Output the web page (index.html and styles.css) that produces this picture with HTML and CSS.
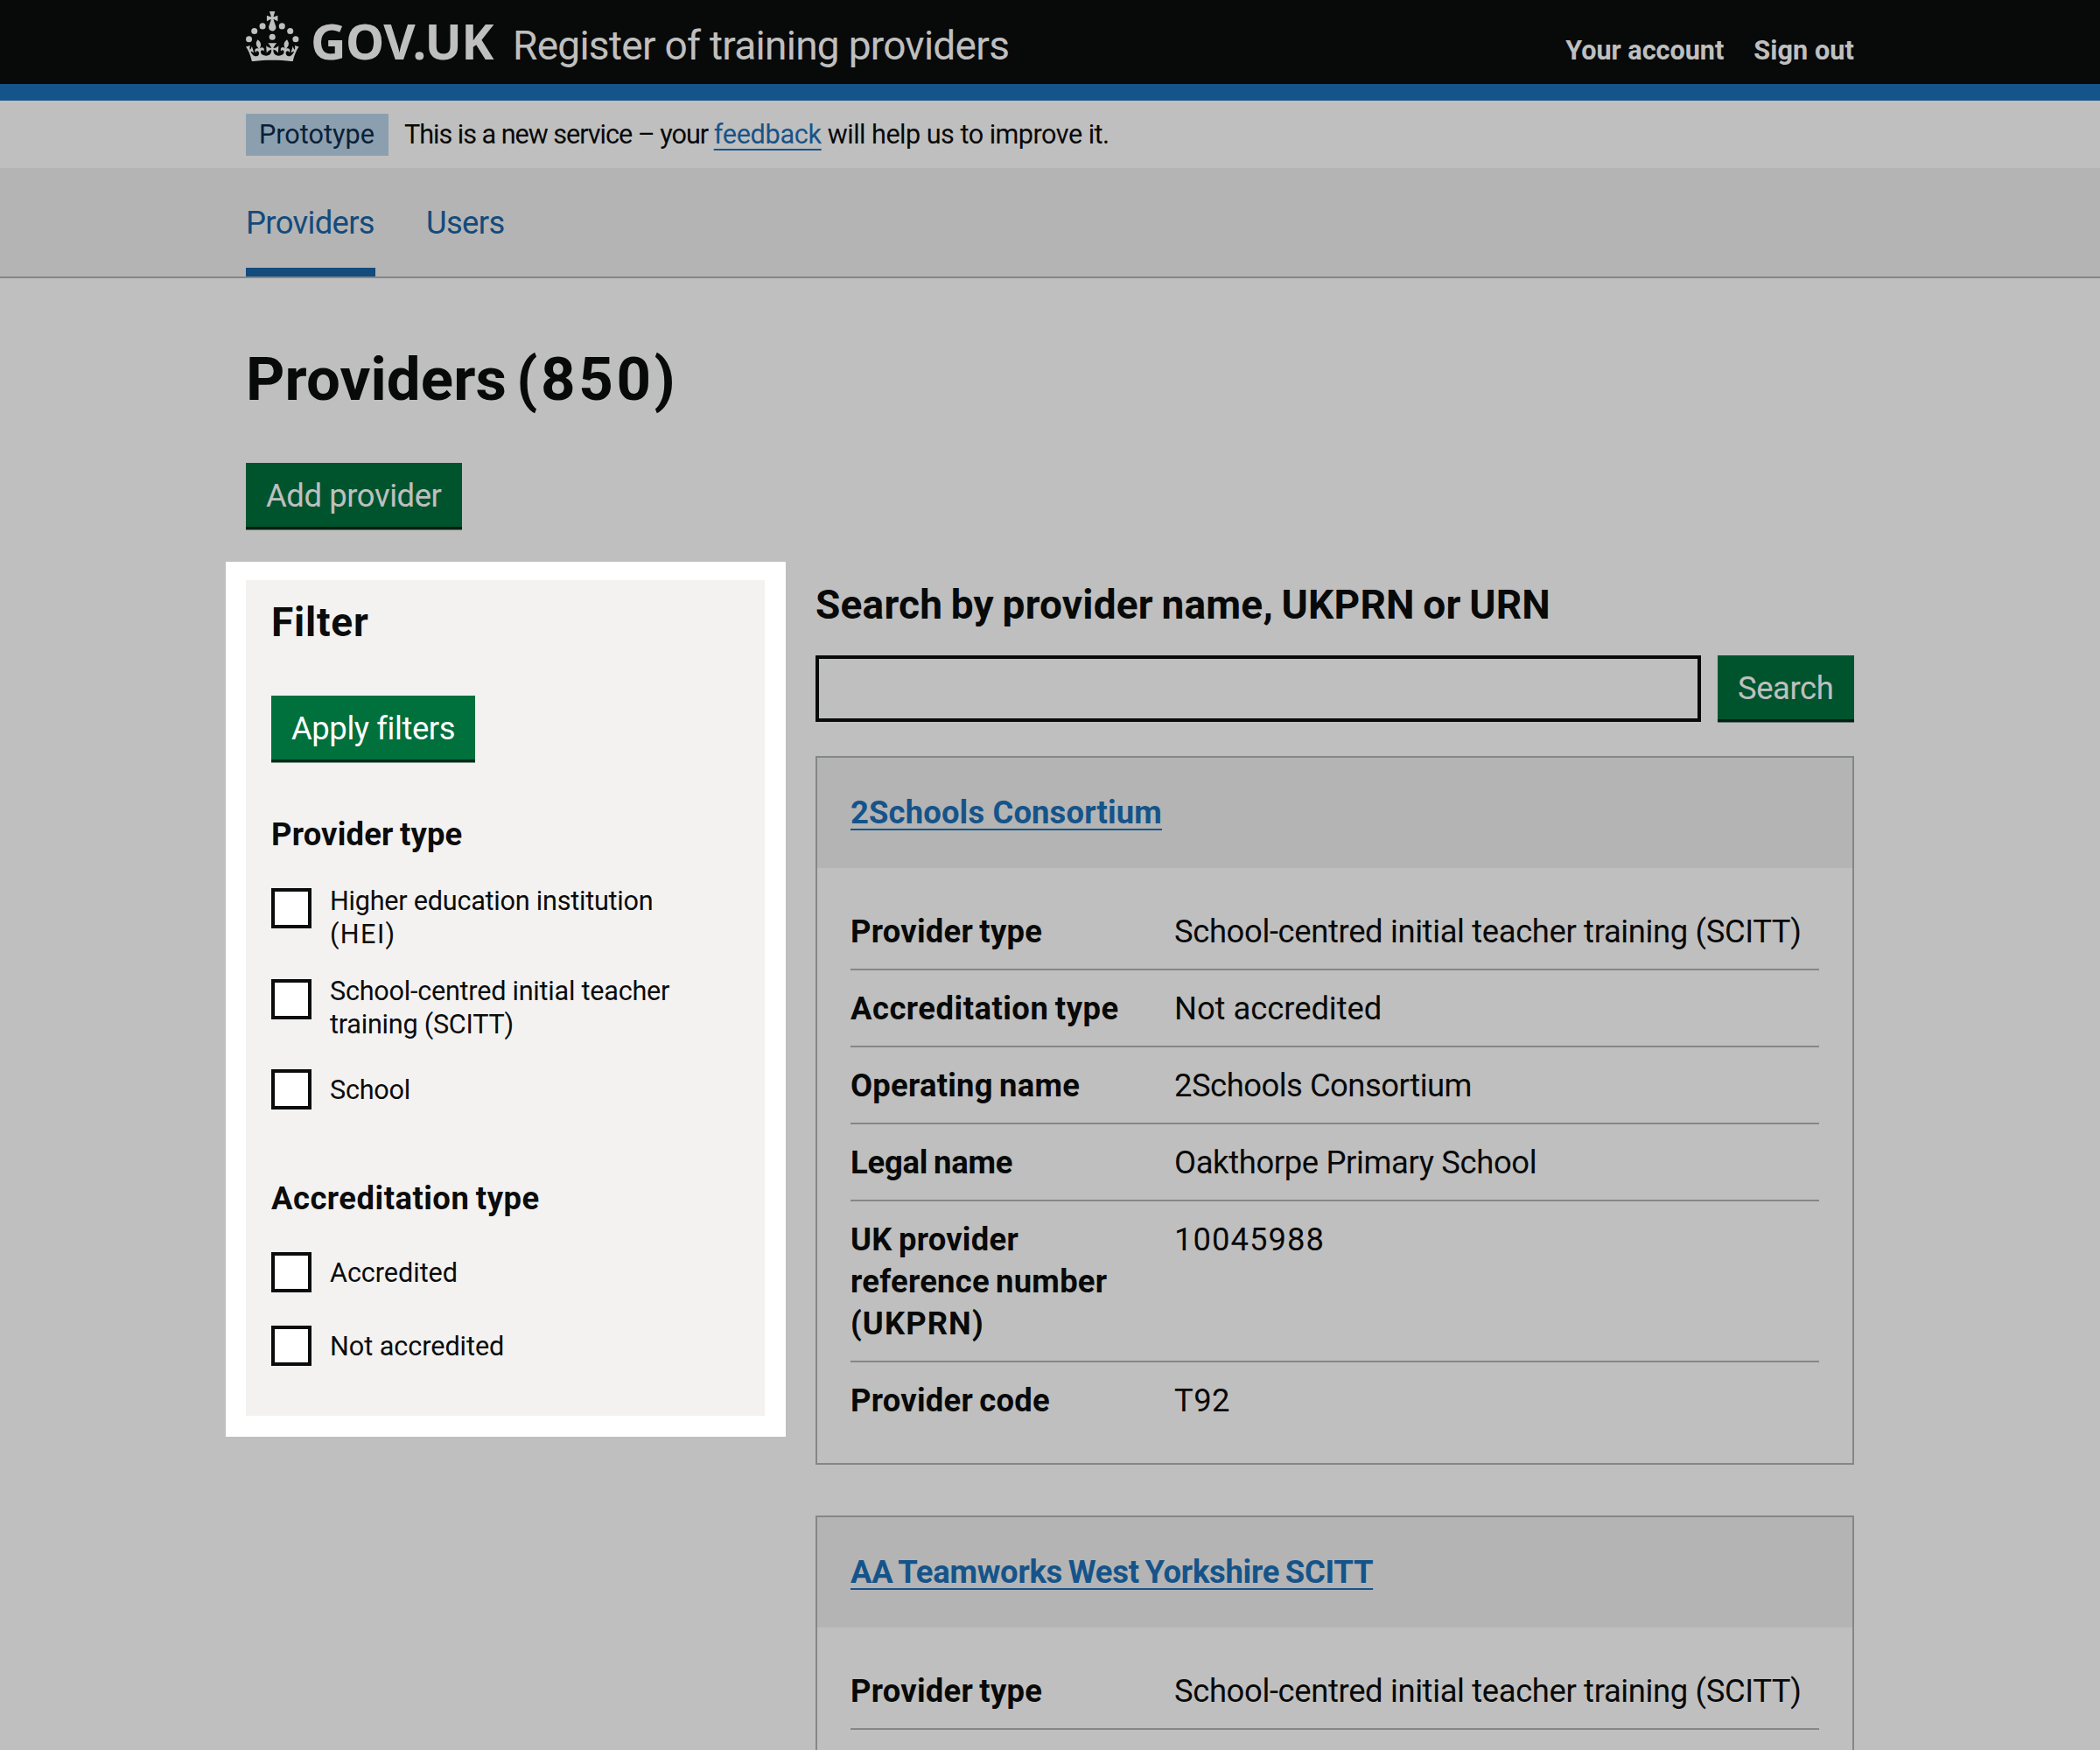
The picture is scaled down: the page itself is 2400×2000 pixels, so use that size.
FILE: index.html
```html
<!DOCTYPE html>
<html lang="en">
<head>
<meta charset="utf-8">
<title>Providers (850) - Register of training providers</title>
<link rel="stylesheet" href="styles.css">
</head>
<body>
<header class="header">
  <div class="container header-row">
    <svg class="crown" viewBox="0 0 64 60" aria-hidden="true"><circle cx="20" cy="17.6" r="3.7"/><circle cx="10.2" cy="23.5" r="3.7"/><circle cx="3.7" cy="33.2" r="3.7"/><circle cx="31.7" cy="30.6" r="3.7"/><circle cx="43.3" cy="17.6" r="3.7"/><circle cx="53.2" cy="23.5" r="3.7"/><circle cx="59.7" cy="33.2" r="3.7"/><path d="M33.1,9.8c.2-.1.3-.3.5-.5l4.6,2.4v-6.8l-4.6,1.5c-.1-.2-.3-.3-.5-.5l1.9-5.9h-6.7l1.9,5.9c-.2.1-.3.3-.5.5l-4.6-1.5v6.8l4.6-2.4c.1.2.3.3.5.5l-2.6,8c-.9,2.8,1.2,5.7,4.1,5.7h0c3,0,5.1-2.9,4.1-5.7l-2.6-8ZM37,37.9s-3.4,3.8-4.1,6.1c2.2,0,4.2-.5,6.4-2.8l-.7,8.5c-2-2.8-4.4-4.1-5.7-3.8.1,3.1.5,6.7,5.8,7.2,3.7.3,6.7-1.5,7-3.8.4-2.6-2-4.3-3.7-1.6-1.4-4.5,2.4-6.1,4.9-3.2-1.9-4.5-1.8-7.7,2.4-10.9,3,4,2.6,7.3-1.2,11.1,2.4-1.3,6.2,0,4,4.6-1.2-2.8-3.7-2.2-4.2.2-.3,1.7.7,3.7,3,4.2,1.9.3,4.7-.9,7-5.9-1.3,0-2.4.7-3.9,1.7l2.4-8c.6,2.3,1.4,3.7,2.2,4.5.6-1.6.5-2.8,0-5.3l5,1.8c-2.6,3.6-5.2,8.7-7.3,17.5-7.4-1.1-15.7-1.7-24.5-1.7h0c-8.8,0-17.1.6-24.5,1.7-2.1-8.9-4.7-13.9-7.3-17.5l5-1.8c-.5,2.5-.6,3.7,0,5.3.8-.8,1.6-2.3,2.2-4.5l2.4,8c-1.5-1-2.6-1.7-3.9-1.7,2.3,5,5.2,6.2,7,5.9,2.3-.4,3.3-2.4,3-4.2-.5-2.4-3-3.1-4.2-.2-2.2-4.6,1.6-6,4-4.6-3.7-3.7-4.2-7.1-1.2-11.1,4.2,3.2,4.3,6.4,2.4,10.9,2.5-2.8,6.3-1.3,4.9,3.2-1.8-2.7-4.1-1-3.7,1.6.3,2.3,3.3,4.1,7,3.8,5.4-.5,5.7-4.2,5.8-7.2-1.3-.2-3.7,1-5.7,3.8l-.7-8.5c2.2,2.3,4.2,2.7,6.4,2.8-.7-2.3-4.1-6.1-4.1-6.1h10.6Z"/></svg>
    <span class="logo">GOV.UK</span>
    <span class="service">Register of training providers</span>
    <nav class="account"><a class="account-link">Your account</a><a class="account-link sign-out">Sign out</a></nav>
  </div>
</header>
<div class="container banner">
  <strong class="tag">Prototype</strong>
  <p class="banner-text"><span class="lead">This is a new service – your&nbsp;</span><a class="link feedback">feedback</a><span class="tail">&nbsp;will help us to improve it.</span></p>
</div>
<nav class="nav">
  <div class="container nav-row">
    <a class="nav-item current">Providers</a>
    <a class="nav-item">Users</a>
  </div>
</nav>
<main class="container main">
  <h1 class="title">Providers <span class="count">(850)</span></h1>
  <a class="button add">Add provider</a>
  <div class="columns">
    <aside class="spotlight"><form class="filter">
      <h2 class="heading wide">Filter</h2>
      <button class="button apply" type="button">Apply filters</button>
      <fieldset class="group">
        <legend class="legend">Provider type</legend>
        <label class="option two"><input type="checkbox" class="box"><span class="label">Higher education institution<br><span class="caps">(HEI)</span></span></label>
        <label class="option two"><input type="checkbox" class="box"><span class="label">School-centred initial teacher<br>training (SCITT)</span></label>
        <label class="option"><input type="checkbox" class="box"><span class="label">School</span></label>
      </fieldset>
      <fieldset class="group">
        <legend class="legend open">Accreditation type</legend>
        <label class="option"><input type="checkbox" class="box"><span class="label even">Accredited</span></label>
        <label class="option"><input type="checkbox" class="box"><span class="label even">Not accredited</span></label>
      </fieldset>
    </form></aside>
    <section class="results">
      <label class="heading search-label" for="q">Search by provider name, UKPRN or URN</label>
      <div class="search-row"><input class="search-input" id="q" type="text"><button class="button search" type="button">Search</button></div>
      <article class="card">
        <h2 class="card-title"><a class="link">2Schools Consortium</a></h2>
        <dl class="list">
          <div class="row"><dt>Provider type</dt><dd>School-centred initial teacher training (SCITT)</dd></div>
          <div class="row"><dt class="open">Accreditation type</dt><dd class="even">Not accredited</dd></div>
          <div class="row"><dt>Operating name</dt><dd class="tight">2Schools Consortium</dd></div>
          <div class="row"><dt class="close">Legal name</dt><dd>Oakthorpe Primary School</dd></div>
          <div class="row"><dt>UK provider<br>reference number<br><span class="ukprn">(UKPRN)</span></dt><dd class="digits">10045988</dd></div>
          <div class="row"><dt>Provider code</dt><dd class="code">T92</dd></div>
        </dl>
      </article>
      <article class="card more">
        <h2 class="card-title"><a class="link teamworks">AA Teamworks West Yorkshire SCITT</a></h2>
        <dl class="list">
          <div class="row"><dt>Provider type</dt><dd>School-centred initial teacher training (SCITT)</dd></div>
        </dl>
      </article>
    </section>
  </div>
</main>
</body>
</html>
```
FILE: styles.css
```css
* { box-sizing: border-box; }
body { margin: 0; height: 2000px; overflow: hidden; background: #fff; color: #0b0c0c; font: 36.4px/48px Roboto, "Noto Sans", sans-serif; }
h1, h2, p, dl, dd { margin: 0; }
.container { width: 1838px; margin: 0 auto; }

/* Header */
.header { height: 115px; background: #0b0c0c; border-bottom: 19px solid #1d70b8; color: #fff; }
.header-row { display: flex; align-items: baseline; padding-top: 14px; white-space: nowrap; }
.crown { width: 61px; height: 57.4px; margin-top: -1px; align-self: flex-start; fill: #fff; }
.logo { width: 210px; margin-left: 13px; font: 700 56px/64px "Noto Sans", sans-serif; letter-spacing: -.5px; }
.service { margin-left: 21px; font-size: 46px; line-height: 60px; letter-spacing: -.72px; }
.account { display: flex; gap: 34px; margin-left: auto; font-size: 30.6px; font-weight: 700; line-height: 40px; }
.account-link { letter-spacing: -.03px; }
.sign-out { letter-spacing: .1px; }

/* Phase banner */
.banner { height: 77px; display: flex; align-items: flex-start; gap: 18px; padding-top: 15px; font-size: 30.6px; line-height: 47px; white-space: nowrap; }
.tag { width: 163px; height: 48px; padding-left: 15px; background: #bbd4ea; color: #0c2d4a; font-weight: 400; }
.lead { letter-spacing: -1.03px; }
.feedback { letter-spacing: -.29px; }
.tail { letter-spacing: -.52px; }
.link { color: #1d70b8; text-decoration: underline 2px; text-underline-offset: 6px; }

/* Service navigation */
.nav { height: 126px; background: #f1f1f1; border-bottom: 2px solid #b1b4b6; }
.nav-row { display: flex; gap: 58px; letter-spacing: -.65px; }
.nav-item { height: 124px; padding-top: 39px; color: #1a65a6; }
.current { width: 148px; border-bottom: 10px solid #1a65a6; }

.main { padding-top: 76px; }
.title { margin-bottom: 55px; font-size: 69px; line-height: 80px; letter-spacing: .1px; word-spacing: -6px; }
.count { letter-spacing: 3.6px; }
.button { display: block; height: 73px; padding: 0 0 0 23px; border: 0; background: #00703c; box-shadow: 0 3.5px 0 #002d18; color: #fff; font: inherit; line-height: 75px; text-align: left; letter-spacing: -.4px; }
.add { width: 247px; }
.apply { width: 233px; }
.search { width: 156px; }
.columns { display: grid; grid-template-columns: 593px 1187px; gap: 58px; margin-top: 61px; }

/* Filter panel stands out from the dimmed page */
.spotlight { position: relative; z-index: 2; align-self: start; margin: -21px -24px 0 -23px; padding: 21px 24px 24px 23px; background: #fff; box-shadow: 0 0 0 2400px rgba(0, 0, 0, .25); }
.filter { height: 955px; padding: 19px 29px 0; background: #f3f2f1; }
.heading { display: block; font-size: 46px; font-weight: 700; line-height: 58px; letter-spacing: .2px; word-spacing: -2px; }
.wide { margin-bottom: 55px; letter-spacing: .8px; }
.group { display: flex; flex-direction: column; gap: 34px; margin: 62px 0 0; padding: 0; border: 0; }
.group + .group { margin-top: 73px; }
.legend { margin-bottom: 37px; padding: 0; font-weight: 700; letter-spacing: .2px; word-spacing: -2px; }
.option { display: flex; gap: 21px; min-height: 50.5px; }
.box { appearance: none; flex: none; width: 46px; height: 46px; margin: 0; border: 4px solid #0b0c0c; background: #fff; }
.label { padding-top: 5px; font-size: 30.6px; line-height: 38.3px; letter-spacing: -.24px; }
.two .label { margin: -4.5px 0 -2.5px; padding-top: 0; }
.caps { letter-spacing: 1.4px; }
.even, .label.even { letter-spacing: -.05px; }

/* Search and results */
.search-label { margin: -1px 0 29px; }
.search-row { display: flex; gap: 19px; margin-bottom: 39px; }
.search-input { flex: 1; height: 76px; border: 4px solid #0b0c0c; background: #fff; }
.card { border: 2px solid #b1b4b6; margin-bottom: 57.5px; }
.more { min-height: 400px; }
.card-title { height: 126px; padding: 39px 38px 0; background: #f1f1f1; font-size: 36.4px; line-height: 48px; letter-spacing: .15px; }
.teamworks { letter-spacing: -.27px; word-spacing: -2px; }
.list { padding: 29px 38px; }
.row { display: grid; grid-template-columns: 370px 1fr; padding: 20px 0 18px; border-bottom: 2px solid #b1b4b6; letter-spacing: -.36px; }
.card:not(.more) .row:last-child { border-bottom: 0; }
dt { font-weight: 700; letter-spacing: .25px; word-spacing: -2px; }
.open { letter-spacing: .5px; }
.close { letter-spacing: -.2px; }
.tight { letter-spacing: -.49px; }
.ukprn { letter-spacing: 1.1px; }
.digits { letter-spacing: 1.05px; }
.code { letter-spacing: .46px; }
```
